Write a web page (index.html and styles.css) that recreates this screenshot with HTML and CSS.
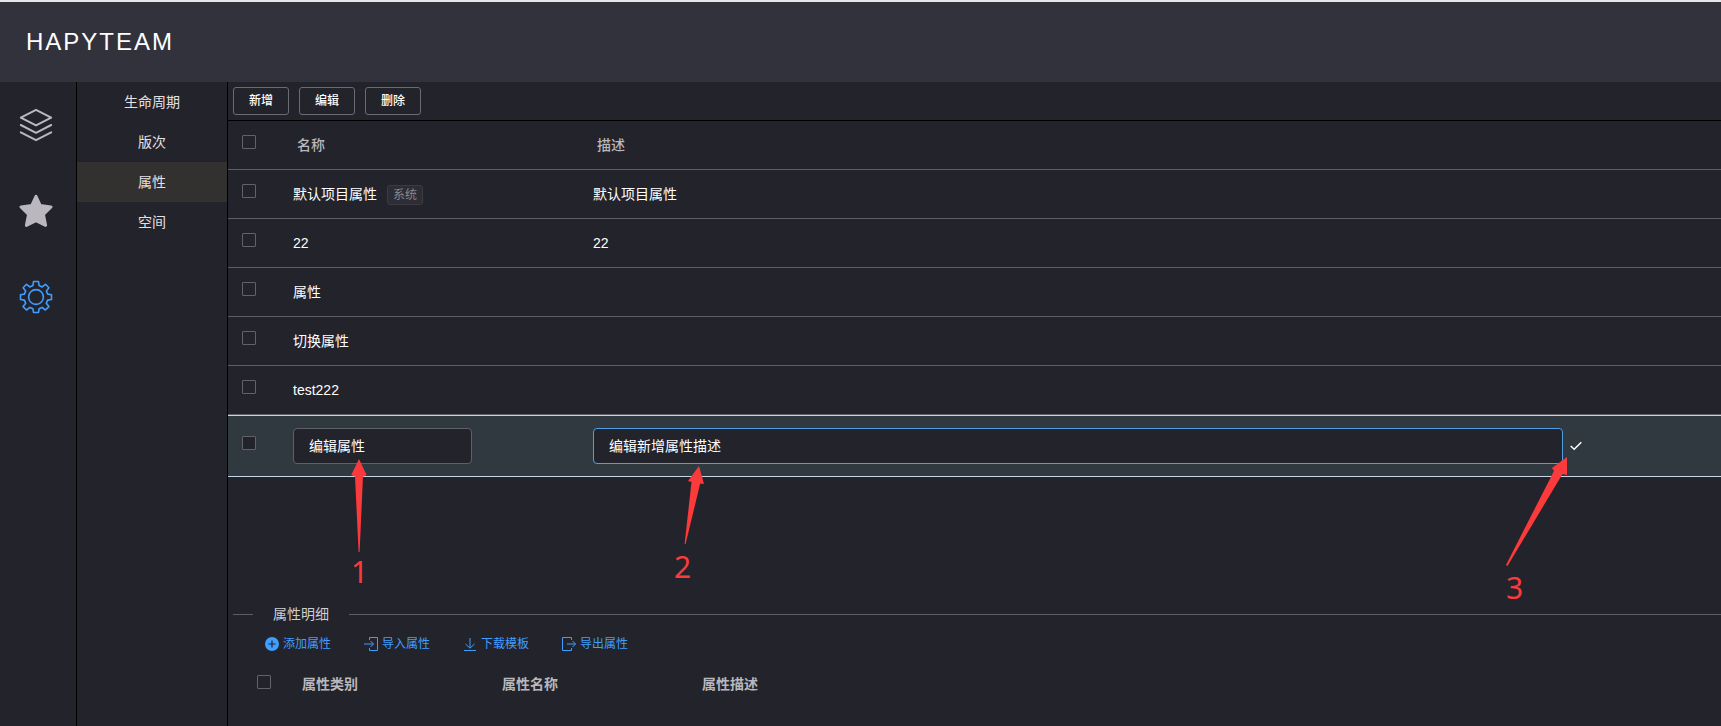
FILE: index.html
```html
<!DOCTYPE html>
<html lang="zh-CN">
<head>
<meta charset="utf-8">
<title>HAPYTEAM</title>
<link rel="stylesheet" href="styles.css">
</head>
<body>
<header class="topbar"><h1 class="brand">HAPYTEAM</h1></header>
<div class="shell">
  <nav class="rail" aria-label="主导航">
    <a class="rail-link" href="#stack" aria-label="项目">
      <svg class="rail-icon" viewBox="0 0 34 34" fill="none" stroke="currentColor" stroke-width="2" stroke-linejoin="round" stroke-linecap="round"><path d="M17 1.8 32.2 9.6 17 17.4 1.8 9.6Z"/><path d="M1.8 17 17 24.8 32.2 17"/><path d="M1.8 24.4 17 32.2 32.2 24.4"/></svg>
    </a>
    <a class="rail-link" href="#star" aria-label="收藏">
      <svg class="rail-icon" viewBox="0 0 34 34" fill="currentColor" stroke="currentColor" stroke-width="3" stroke-linejoin="round"><path d="M17 2.4 21.3 11.6 32 13 24.4 20.4 26.6 31.4 17 26.6 7.4 31.4 9.6 20.4 2 13 12.7 11.6Z"/></svg>
    </a>
    <a class="rail-link rail-link-active" href="#settings" aria-label="设置">
      <svg class="rail-icon" viewBox="0 0 34 34" fill="none" stroke="currentColor" stroke-width="1.6" stroke-linejoin="round"><circle cx="17" cy="17" r="7.4"/><path d="M14.5 1.5h5l.6 4.1 3.1 1.3 3.3-2.6 3.4 3.4-2.5 3.4 1.3 3 3.8.6v4.8l-3.9.6-1.3 3.1 2.6 3.4-3.5 3.4-3.3-2.6-3 1.3-.6 3.8h-5l-.6-3.8-3-1.3-3.4 2.6L4.1 26.600l2.600-3.400-1.300-3.100-3.900-.6v-4.800l3.900-.6 1.300-3.100-2.600-3.300 3.400-3.400 3.300 2.600 3.100-1.300Z"/></svg>
    </a>
  </nav>
  <nav class="subnav" aria-label="设置菜单">
    <a class="subnav-link" href="#lifecycle">生命周期</a>
    <a class="subnav-link" href="#revision">版次</a>
    <a class="subnav-link subnav-link-active" href="#attribute">属性</a>
    <a class="subnav-link" href="#space">空间</a>
  </nav>
  <main class="content">
    <div class="toolbar">
      <button class="btn" type="button">新增</button>
      <button class="btn" type="button">编辑</button>
      <button class="btn" type="button">删除</button>
    </div>
    <div class="list">
      <table class="grid">
        <colgroup><col class="col-check"><col class="col-name"><col></colgroup>
        <thead>
          <tr><th class="pick"><input class="check" type="checkbox" aria-label="全选"></th><th>名称</th><th>描述</th></tr>
        </thead>
        <tbody>
          <tr><td class="pick"><input class="check" type="checkbox" aria-label="选择 默认项目属性"></td><td>默认项目属性<span class="tag">系统</span></td><td>默认项目属性</td></tr>
          <tr><td class="pick"><input class="check" type="checkbox" aria-label="选择 22"></td><td>22</td><td>22</td></tr>
          <tr><td class="pick"><input class="check" type="checkbox" aria-label="选择 属性"></td><td>属性</td><td></td></tr>
          <tr><td class="pick"><input class="check" type="checkbox" aria-label="选择 切换属性"></td><td>切换属性</td><td></td></tr>
          <tr><td class="pick"><input class="check" type="checkbox" aria-label="选择 test222"></td><td>test222</td><td></td></tr>
          <tr class="editing">
            <td class="pick"><input class="check" type="checkbox" aria-label="选择 编辑属性"></td>
            <td><input class="field field-name" type="text" value="编辑属性" aria-label="名称"></td>
            <td><div class="edit-line"><input class="field field-active" type="text" value="编辑新增属性描述" aria-label="描述"><button class="confirm" type="button" aria-label="确认"><svg class="confirm-icon" viewBox="0 0 12 10" fill="none" stroke="currentColor" stroke-width="1.5"><path d="M.7 5 4.200 8.300 11.300 1.200"/></svg></button></div></td>
          </tr>
        </tbody>
      </table>
      <div class="note note-1"><svg class="arrow-1" viewBox="0 0 18 94" fill="currentColor"><path d="M9 0 16.600 16 13 17.500 9.600 93h-1L5 17.500 1.200 16Z"/></svg><span class="digit">1</span></div>
      <div class="note note-2"><svg class="arrow-2" viewBox="0 0 22 80" fill="currentColor"><path d="M15 0 20 18 16.200 17.500 1.600 78H.6L7.500 16 4 15Z"/></svg><span class="digit">2</span></div>
      <div class="note note-3"><svg class="arrow-3" viewBox="0 0 62 110" fill="currentColor"><path d="M61 0V18L56.500 17 1.500 109 0 108 48 14 46 11Z"/></svg><span class="digit">3</span></div>
    </div>
    <section class="detail">
      <h2 class="legend">属性明细</h2>
      <div class="actions">
        <button class="action" type="button"><svg class="action-icon" viewBox="0 0 14 14"><circle cx="7" cy="7" r="7" fill="currentColor"/><path d="M7 3.500v7M3.500 7h7" stroke="#23232b" stroke-width="1.200"/></svg>添加属性</button>
        <button class="action" type="button"><svg class="action-icon" viewBox="0 0 14 14" fill="none" stroke="currentColor"><path d="M5.500 3V.5h8v13h-8V11M0 7h9.500M6.500 4l3 3-3 3"/></svg>导入属性</button>
        <button class="action" type="button"><svg class="action-icon" viewBox="0 0 14 14" fill="none" stroke="currentColor"><path d="M7 1v10M2.500 7 7 11.200 11.500 7M1 13.500h12"/></svg>下载模板</button>
        <button class="action" type="button"><svg class="action-icon" viewBox="0 0 14 14" fill="none" stroke="currentColor"><path d="M9.500 3V.5h-9v13h9V11M5 7h8.500M10.500 4l3 3-3 3"/></svg>导出属性</button>
      </div>
      <table class="subgrid">
        <colgroup><col class="col-check"><col class="col-sub"><col class="col-sub"><col></colgroup>
        <thead><tr><th class="subpick"><input class="check" type="checkbox" aria-label="全选属性"></th><th>属性类别</th><th>属性名称</th><th>属性描述</th></tr></thead>
      </table>
    </section>
  </main>
</div>
</body>
</html>
```
FILE: styles.css
```css
* { box-sizing: border-box; }

body {
  margin: 0;
  min-height: 100vh;
  display: flex;
  flex-direction: column;
  background: #23232b;
  color: #fff;
  font: 14px/20px "Liberation Sans", "Noto Sans CJK SC", sans-serif;
}

button, input { font: inherit; color: inherit; }
a { color: inherit; text-decoration: none; }
svg { display: block; }

.topbar {
  height: 82px;
  padding-left: 26px;
  display: flex;
  align-items: center;
  background: #32323d;
  border-top: 2px solid #e4e6ea;
}
.brand { margin: 0; font-size: 24px; line-height: 32px; font-weight: 400; letter-spacing: 2px; }

.shell { flex: 1; display: flex; }

.rail {
  width: 77px;
  padding: 26px 5px 0 0;
  border-right: 1px solid #000;
  display: flex;
  flex-direction: column;
  align-items: center;
  gap: 52px;
  color: #bab8be;
}
.rail-link-active { color: #409eff; }
.rail-icon { width: 34px; height: 34px; }

.subnav { width: 151px; border-right: 1px solid #000; color: #e4e0e4; }
.subnav-link { display: block; line-height: 40px; text-align: center; }
.subnav-link-active { background: #333130; }

.content { flex: 1; min-width: 0; display: flex; flex-direction: column; }

.toolbar {
  display: flex;
  gap: 10px;
  padding: 5px;
  border-bottom: 1px solid #000;
}
.btn {
  width: 56px;
  height: 28px;
  padding: 0;
  background: transparent;
  border: 1px solid #6b6b72;
  border-radius: 3px;
  font-size: 12px;
  font-weight: 500;
}

.list { flex: 1; position: relative; }
.grid, .subgrid { width: 100%; table-layout: fixed; border-spacing: 0; text-align: left; }
.col-check { width: 50px; }
.col-name { width: 300px; }
.grid th, .grid td { height: 49px; padding: 0 15px; border-bottom: 1px solid #5e5e67; }
.grid th { padding-left: 19px; color: #b8b8bd; font-weight: 500; }
.grid .pick { padding: 0 0 6px 14px; }

.check {
  appearance: none;
  display: block;
  width: 14px;
  height: 14px;
  margin: 0;
  background: #23232b;
  border: 1px solid #62626a;
  border-radius: 1px;
}

.tag {
  display: inline-block;
  margin-left: 10px;
  padding: 0 5px;
  background: #2d2d36;
  border: 1px solid #3b3b44;
  border-radius: 3px;
  color: #88888f;
  font-size: 12px;
  line-height: 18px;
}

.grid .editing td {
  height: 62px;
  background: #303840;
  border-top: 1px solid #c3d5e4;
  border-bottom-color: #c3d5e4;
}
.field {
  display: block;
  height: 36px;
  padding: 0 15px 2px;
  background: #23232b;
  border: 1px solid #606068;
  border-radius: 4px;
}
.field-name { width: 179px; }
.field-active { flex: 1; border-color: #4f9fe6; }
.edit-line { display: flex; align-items: center; gap: 7px; padding-right: 124px; }
.confirm { padding: 0; background: transparent; border: 0; }
.confirm-icon { width: 12px; height: 10px; }

/* Step markers float over the list */
.note { position: absolute; color: #fb3b3b; }
.note-1 { left: 122px; top: 338px; }
.note-2 { left: 446px; top: 345px; }
.note-3 { right: 153px; top: 336px; }
.digit { display: block; font: 30px/36px "Noto Sans", sans-serif; }
.note-1 .digit { padding-left: 1px; }
.arrow-1 { width: 18px; height: 94px; margin-bottom: 1px; }
.arrow-2 { width: 22px; height: 80px; margin: 0 0 3px 10px; }
.arrow-3 { width: 62px; height: 110px; margin-bottom: 3px; }

.detail { padding: 0 0 22px 5px; }
.legend {
  margin: 0;
  display: flex;
  align-items: center;
  gap: 20px;
  color: #cfcfd3;
  font-size: 14px;
  line-height: 20px;
  font-weight: 400;
}
.legend::before, .legend::after { content: ""; width: 20px; height: 1px; background: #5e5e67; }
.legend::after { flex: 1; }
.actions { display: flex; gap: 33px; padding: 10px 0 0 32px; }
.action {
  display: flex;
  align-items: center;
  gap: 4px;
  padding: 0;
  background: transparent;
  border: 0;
  color: #409eff;
  font-size: 12px;
  line-height: 20px;
}
.action-icon { width: 14px; height: 14px; }
.subgrid { margin-top: 10px; }
.subgrid th { height: 40px; padding: 0 0 0 19px; color: #b8b8bd; font-weight: 700; }
.subgrid .subpick { padding: 0 0 4px 24px; }
.col-sub { width: 200px; }
```
